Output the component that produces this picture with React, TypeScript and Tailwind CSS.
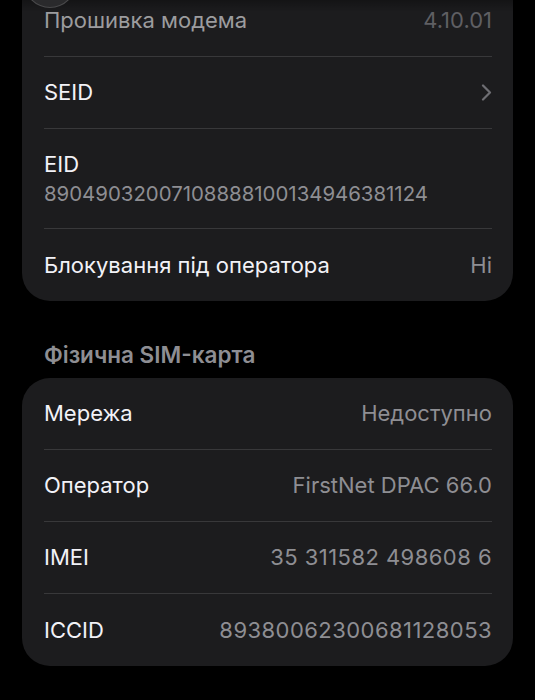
import React from "react";

type Row = { label: string; value?: string; chevron?: boolean; sub?: string; dim?: boolean; num?: boolean };

const card1: Row[] = [
  { label: "Прошивка модема", value: "4.10.01", dim: true },
  { label: "SEID", chevron: true },
  { label: "EID", sub: "89049032007108888100134946381124" },
  { label: "Блокування під оператора", value: "Ні" },
];

const card2: Row[] = [
  { label: "Мережа", value: "Недоступно" },
  { label: "Оператор", value: "FirstNet DPAC 66.0" },
  { label: "IMEI", value: "35 311582 498608 6", num: true },
  { label: "ICCID", value: "89380062300681128053", num: true },
];

function Chevron() {
  return (
    <svg width="11" height="17" viewBox="0 0 11 17" fill="none">
      <path d="M2 1.5 L9 8.5 L2 15.5" stroke="#6e6e73" strokeWidth="2.2" strokeLinecap="round" strokeLinejoin="round" />
    </svg>
  );
}

function RowView({ r, last }: { r: Row; last: boolean }) {
  return (
    <div className="pl-[22px] pr-[21px]">
      {r.sub ? (
        <div className="flex h-[99px] flex-col justify-center">
          <div className="text-[22px] leading-[28px] text-[#f2f2f7]">{r.label}</div>
          <div className="mt-[3px] text-[20.4px] leading-[26px] text-[#8e8e93]">{r.sub}</div>
        </div>
      ) : (
        <div className={`flex items-center justify-between ${last ? "h-[72px]" : "h-[71px]"}`}>
          <span className={`text-[22px] ${r.dim ? "text-[#9c9c9f]" : "text-[#f2f2f7]"}`}>{r.label}</span>
          {r.chevron ? (
            <Chevron />
          ) : (
            <span
              className={`text-[22px] ${r.num ? "tracking-[0.45px]" : ""} ${r.dim ? "text-[#5f5f63]" : "text-[#8e8e93]"}`}
            >
              {r.value}
            </span>
          )}
        </div>
      )}
      {!last && <div className="h-px bg-[#38383a]" />}
    </div>
  );
}

export default function App() {
  return (
    <div
      className="relative h-[700px] w-[535px] overflow-hidden bg-black px-[22px]"
      style={{ fontFamily: "Inter, 'Noto Sans', sans-serif" }}
    >
      <div className="-mt-[15px] rounded-b-[28px] bg-[#1c1c1e]">
        {card1.map((r, i) => (
          <RowView key={r.label} r={r} last={i === card1.length - 1} />
        ))}
      </div>
      <div className="pl-[22px] pt-[40px] pb-[9px] text-[22.5px] font-semibold leading-[28px] text-[#8e8e93]">
        Фізична SIM-карта
      </div>
      <div className="rounded-[28px] bg-[#1c1c1e]">
        {card2.map((r, i) => (
          <RowView key={r.label} r={r} last={i === card2.length - 1} />
        ))}
      </div>
      <div className="pointer-events-none absolute left-0 right-0 top-0 h-[12px] bg-gradient-to-b from-black/30 to-transparent" />
      <div className="absolute left-[24px] top-[-44px] h-[52px] w-[52px] rounded-full border border-white/15 bg-[#2a2a2c]" />
    </div>
  );
}
